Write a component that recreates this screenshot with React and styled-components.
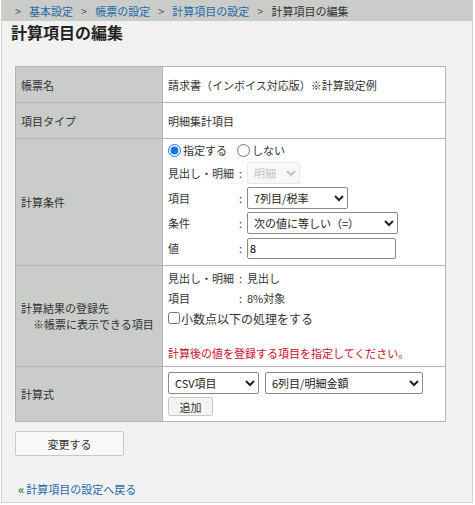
import styled, { createGlobalStyle } from "styled-components";

const GlobalStyle = createGlobalStyle`
  html, body {
    margin: 0;
    padding: 0;
    background: #ffffff;
  }
  body {
    font-family: "Noto Sans CJK JP", "Noto Sans", sans-serif;
    font-size: 11px;
    color: #333;
  }
`;

const Panel = styled.div`
  margin-left: 1px;
  width: 470px;
  height: 502px;
  border: 1px solid #d4d6d4;
  border-top: none;
  background: #f0f1f0;
  box-sizing: content-box;
  display: flex;
  flex-direction: column;
`;

const BreadCrumbBar = styled.div`
  height: 21px;
  background: #c9ccc9;
  display: flex;
  align-items: center;
  padding-left: 13px;
  gap: 8px;
  font-size: 11px;
  color: #444;
`;

const Crumb = styled.a`
  color: ${(p) => (p.$current ? "#333" : "#1f6aa8")};
  text-decoration: none;
`;

const Sep = styled.span`
  color: #555;
`;

const Title = styled.h1`
  margin: 0;
  padding: 1px 0 0 9px;
  font-size: 16px;
  font-weight: bold;
  color: #222;
  line-height: 20px;
`;

const Content = styled.div`
  padding: 24px 0 0 13px;
  display: flex;
  flex-direction: column;
`;

const Table = styled.table`
  width: 431px;
  border-collapse: collapse;
  background: #fff;
  border: 1px solid #b4b4b4;
`;

const Label = styled.th`
  width: 141px;
  background: #c9ccc9;
  text-align: left;
  font-weight: normal;
  padding: 0 0 0 5px;
  border: 1px solid #b4b4b4;
  height: ${(p) => p.$h}px;
  vertical-align: middle;
  color: #333;
  line-height: 16px;
`;

const Indent = styled.span`
  display: block;
  padding-left: 12px;
`;

const Cell = styled.td`
  padding: ${(p) => p.$pad || "0 5px"};
  border: 1px solid #b4b4b4;
  vertical-align: ${(p) => p.$valign || "middle"};
  color: #333;
`;

const Stack = styled.div`
  display: flex;
  flex-direction: column;
  gap: ${(p) => p.$gap || 3}px;
`;

const RadioRow = styled.div`
  display: flex;
  align-items: center;
  gap: 10px;
  height: 18px;
`;

const RadioLabel = styled.label`
  display: flex;
  align-items: center;
  gap: 2px;
`;

const Radio = styled.input`
  margin: 0;
  width: 13px;
  height: 13px;
  accent-color: #1a73e8;
`;

const FieldRow = styled.div`
  display: flex;
  align-items: center;
  height: ${(p) => p.$h || 22}px;
`;

const FieldName = styled.span`
  width: 71px;
  flex-shrink: 0;
  white-space: nowrap;
`;

const Colon = styled.span`
  width: 8px;
  flex-shrink: 0;
`;

const Select = styled.select`
  width: ${(p) => p.$w}px;
  height: 22px;
  font-family: "Noto Sans CJK JP", "Noto Sans", sans-serif;
  font-size: 11px;
  color: #222;
  border: 1px solid #8a8a8a;
  border-radius: 2px;
  background: #fff;
  padding: 0 2px;
  &:disabled {
    color: #aaa;
    border-color: #ddd;
    background: #f6f6f6;
  }
`;

const TextInput = styled.input`
  width: 149px;
  height: 21px;
  box-sizing: border-box;
  font-family: "Noto Sans CJK JP", "Noto Sans", sans-serif;
  font-size: 11px;
  border: 1px solid #8a8a8a;
  border-radius: 2px;
  padding: 0 2px;
`;

const CheckLabel = styled.label`
  display: flex;
  align-items: center;
  gap: 1px;
  height: 18px;
  font-size: 12px;
`;

const Check = styled.input`
  margin: 0;
  width: 12px;
  height: 12px;
`;

const Spacer = styled.div`
  height: ${(p) => p.$h}px;
`;

const ErrorText = styled.div`
  color: #c8102e;
`;

const FormulaRow = styled.div`
  display: flex;
  gap: 6px;
`;

const SmallButton = styled.button`
  width: 45px;
  height: 19px;
  padding: 0;
  font-family: "Noto Sans CJK JP", "Noto Sans", sans-serif;
  font-size: 11px;
  color: #333;
  background: #f4f4f4;
  border: 1px solid #c8c8c8;
  border-radius: 2px;
`;

const SubmitButton = styled.button`
  margin-top: 9px;
  width: 109px;
  height: 25px;
  padding: 0;
  font-family: "Noto Sans CJK JP", "Noto Sans", sans-serif;
  font-size: 11px;
  color: #333;
  background: #f8f8f8;
  border: 1px solid #c8c8c8;
  border-radius: 2px;
`;

const BackLink = styled.a`
  margin-top: 24px;
  margin-left: 3px;
  display: flex;
  align-items: center;
  gap: 2px;
  color: #1f6aa8;
  text-decoration: none;
`;

const Arrow = styled.span`
  color: #2e8b3a;
  font-weight: bold;
  font-size: 12px;
`;

export default function App() {
  return (
    <>
      <GlobalStyle />
      <Panel>
        <BreadCrumbBar>
          <Sep>&gt;</Sep>
          <Crumb href="#">基本設定</Crumb>
          <Sep>&gt;</Sep>
          <Crumb href="#">帳票の設定</Crumb>
          <Sep>&gt;</Sep>
          <Crumb href="#">計算項目の設定</Crumb>
          <Sep>&gt;</Sep>
          <Crumb $current>計算項目の編集</Crumb>
        </BreadCrumbBar>
        <Title>計算項目の編集</Title>
        <Content>
          <Table>
            <tbody>
              <tr>
                <Label $h={35}>帳票名</Label>
                <Cell>請求書（インボイス対応版）※計算設定例</Cell>
              </tr>
              <tr>
                <Label $h={35}>項目タイプ</Label>
                <Cell>明細集計項目</Cell>
              </tr>
              <tr>
                <Label $h={126}>計算条件</Label>
                <Cell $valign="top" $pad="2px 5px 3px">
                  <Stack $gap={3}>
                    <RadioRow>
                      <RadioLabel>
                        <Radio type="radio" name="cond" defaultChecked />
                        指定する
                      </RadioLabel>
                      <RadioLabel>
                        <Radio type="radio" name="cond" />
                        しない
                      </RadioLabel>
                    </RadioRow>
                    <FieldRow>
                      <FieldName>見出し・明細</FieldName>
                      <Colon>:</Colon>
                      <Select $w={53} disabled defaultValue="明細">
                        <option>明細</option>
                      </Select>
                    </FieldRow>
                    <FieldRow>
                      <FieldName>項目</FieldName>
                      <Colon>:</Colon>
                      <Select $w={101} defaultValue="7列目/税率">
                        <option>7列目/税率</option>
                      </Select>
                    </FieldRow>
                    <FieldRow>
                      <FieldName>条件</FieldName>
                      <Colon>:</Colon>
                      <Select $w={151} defaultValue="次の値に等しい（=）">
                        <option>次の値に等しい（=）</option>
                      </Select>
                    </FieldRow>
                    <FieldRow>
                      <FieldName>値</FieldName>
                      <Colon>:</Colon>
                      <TextInput defaultValue="8" />
                    </FieldRow>
                  </Stack>
                </Cell>
              </tr>
              <tr>
                <Label $h={100}>
                  計算結果の登録先
                  <Indent>※帳票に表示できる項目</Indent>
                </Label>
                <Cell $valign="top" $pad="3px 5px">
                  <Stack $gap={2}>
                    <FieldRow $h={18}>
                      <FieldName>見出し・明細</FieldName>
                      <Colon>:</Colon>
                      見出し
                    </FieldRow>
                    <FieldRow $h={18}>
                      <FieldName>項目</FieldName>
                      <Colon>:</Colon>
                      8%対象
                    </FieldRow>
                    <CheckLabel>
                      <Check type="checkbox" />
                      小数点以下の処理をする
                    </CheckLabel>
                    <Spacer $h={14} />
                    <ErrorText>計算後の値を登録する項目を指定してください。</ErrorText>
                  </Stack>
                </Cell>
              </tr>
              <tr>
                <Label $h={54}>計算式</Label>
                <Cell $valign="top" $pad="5px 5px">
                  <Stack $gap={3}>
                    <FormulaRow>
                      <Select $w={91} defaultValue="CSV項目">
                        <option>CSV項目</option>
                      </Select>
                      <Select $w={158} defaultValue="6列目/明細金額">
                        <option>6列目/明細金額</option>
                      </Select>
                    </FormulaRow>
                    <div>
                      <SmallButton>追加</SmallButton>
                    </div>
                  </Stack>
                </Cell>
              </tr>
            </tbody>
          </Table>
          <div>
            <SubmitButton>変更する</SubmitButton>
          </div>
          <BackLink href="#">
            <Arrow>«</Arrow>
            計算項目の設定へ戻る
          </BackLink>
        </Content>
      </Panel>
    </>
  );
}
